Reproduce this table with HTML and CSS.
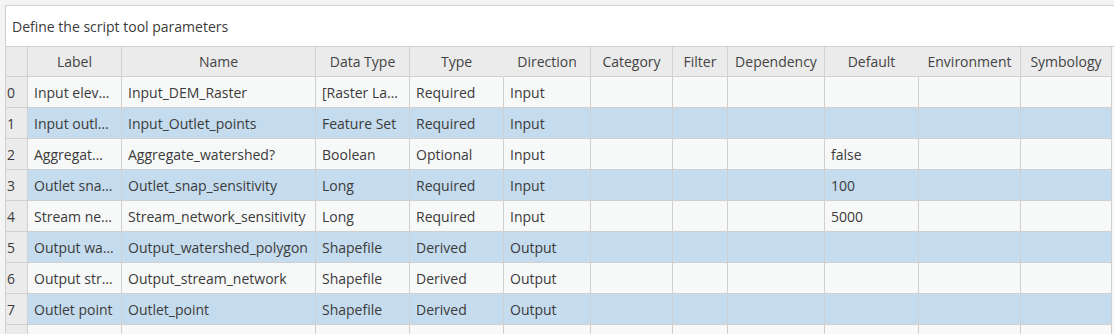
FILE: index.html
```html
<!DOCTYPE html>
<html>
<head>
<meta charset="utf-8">
<link rel="stylesheet" href="styles.css">
</head>
<body>
<div class="panel">
  <div class="title">Define the script tool parameters</div>
  <div class="grid">
    <div class="hd rn"></div>
    <div class="hd">Label</div>
    <div class="hd">Name</div>
    <div class="hd">Data Type</div>
    <div class="hd nob">Type</div>
    <div class="hd">Direction</div>
    <div class="hd">Category</div>
    <div class="hd">Filter</div>
    <div class="hd">Dependency</div>
    <div class="hd nob">Default</div>
    <div class="hd">Environment</div>
    <div class="hd">Symbology</div>

    <div class="rn">0</div>
    <div class="c">Input elev…</div><div class="c">Input_DEM_Raster</div><div class="c">[Raster La…</div><div class="c">Required</div><div class="c">Input</div><div class="c"></div><div class="c"></div><div class="c"></div><div class="c"></div><div class="c"></div><div class="c"></div>

    <div class="rn">1</div>
    <div class="c s">Input outl…</div><div class="c s">Input_Outlet_points</div><div class="c s">Feature Set</div><div class="c s">Required</div><div class="c s">Input</div><div class="c s"></div><div class="c s"></div><div class="c s"></div><div class="c s"></div><div class="c s"></div><div class="c s"></div>

    <div class="rn">2</div>
    <div class="c">Aggregat…</div><div class="c">Aggregate_watershed?</div><div class="c">Boolean</div><div class="c">Optional</div><div class="c">Input</div><div class="c"></div><div class="c"></div><div class="c"></div><div class="c">false</div><div class="c"></div><div class="c"></div>

    <div class="rn">3</div>
    <div class="c s">Outlet sna…</div><div class="c s">Outlet_snap_sensitivity</div><div class="c s">Long</div><div class="c s">Required</div><div class="c s">Input</div><div class="c s"></div><div class="c s"></div><div class="c s"></div><div class="c s">100</div><div class="c s"></div><div class="c s"></div>

    <div class="rn">4</div>
    <div class="c">Stream ne…</div><div class="c">Stream_network_sensitivity</div><div class="c">Long</div><div class="c">Required</div><div class="c">Input</div><div class="c"></div><div class="c"></div><div class="c"></div><div class="c">5000</div><div class="c"></div><div class="c"></div>

    <div class="rn">5</div>
    <div class="c s">Output wa…</div><div class="c s">Output_watershed_polygon</div><div class="c s">Shapefile</div><div class="c s">Derived</div><div class="c s">Output</div><div class="c s"></div><div class="c s"></div><div class="c s"></div><div class="c s"></div><div class="c s"></div><div class="c s"></div>

    <div class="rn">6</div>
    <div class="c">Output str…</div><div class="c">Output_stream_network</div><div class="c">Shapefile</div><div class="c">Derived</div><div class="c">Output</div><div class="c"></div><div class="c"></div><div class="c"></div><div class="c"></div><div class="c"></div><div class="c"></div>

    <div class="rn">7</div>
    <div class="c s">Outlet point</div><div class="c s">Outlet_point</div><div class="c s">Shapefile</div><div class="c s">Derived</div><div class="c s">Output</div><div class="c s"></div><div class="c s"></div><div class="c s"></div><div class="c s"></div><div class="c s"></div><div class="c s"></div>

    <div class="rn"></div>
    <div class="c"></div><div class="c"></div><div class="c"></div><div class="c"></div><div class="c"></div><div class="c"></div><div class="c"></div><div class="c"></div><div class="c"></div><div class="c"></div><div class="c"></div>
  </div>
</div>
</body>
</html>
```

FILE: styles.css
```css
html, body {
  margin: 0;
  padding: 0;
  background: #f3f4f4;
  height: 100%;
  overflow: hidden;
}
body {
  padding: 5px 0 0 5px;
  box-sizing: border-box;
  font-family: "Open Sans", "Noto Sans", sans-serif;
  font-size: 14px;
  color: #3b3b3b;
}
.panel {
  border-left: 1px solid #d0d0d0;
  border-top: 1px solid #d0d0d0;
  background: #f7f8f8;
  height: 100%;
  box-sizing: border-box;
  overflow: hidden;
}
.title {
  background: #ffffff;
  border-bottom: 1px solid #d0d0d0;
  display: flex;
  align-items: center;
  padding-left: 6px;
  box-sizing: border-box;
  height: 41px;
}
.grid {
  display: grid;
  grid-template-columns: 22px 94px 194px 94px 94px 87px 82px 55px 97px 94px 102px 91px;
  grid-auto-rows: 31px;
  grid-template-rows: 30px;
}
.grid > div {
  border-right: 1px solid #d0d0d0;
  border-bottom: 1px solid #d0d0d0;
  box-sizing: border-box;
  white-space: nowrap;
  overflow: hidden;
  display: flex;
  align-items: center;
}
.hd {
  background: #ebebeb;
  justify-content: center;
  color: #444;
}
.hd.nob {
  border-right-color: #ebebeb !important;
}
.rn {
  background: #ebebeb;
  padding-left: 1px;
}
.c {
  padding-left: 6px;
  background: #f7f8f8;
}
.c.s {
  background: #c5dbee;
}
```
